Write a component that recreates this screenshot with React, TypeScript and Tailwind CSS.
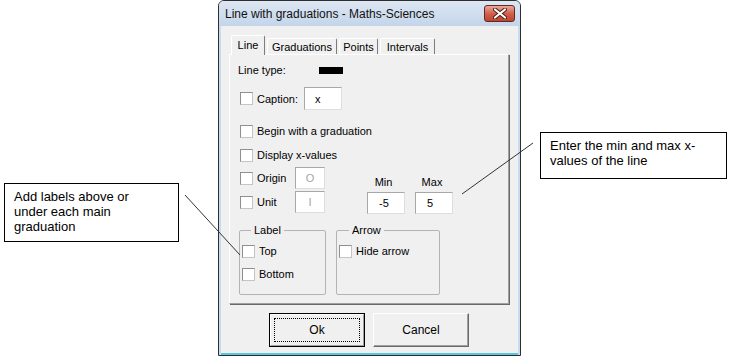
import React from 'react';

function Check() {
  return <span className="w-[13px] h-[13px] shrink-0 bg-white border border-[#8f8f8f] border-r-[#c4c4c4] border-b-[#c4c4c4]" />;
}

function TextBox({ w, value, grey, center }: { w: string; value: string; grey?: boolean; center?: boolean }) {
  return (
    <div
      className={`${w} h-[22px] bg-white border border-[#a8a8a8] border-r-[#dedede] border-b-[#dedede] flex items-center ${center ? 'justify-center' : 'pl-[11px]'} ${grey ? 'text-[#a6a6a6]' : 'text-black'}`}
    >
      {value}
    </div>
  );
}

function CheckRow({ label, className = '' }: { label: string; className?: string }) {
  return (
    <div className={`flex items-center gap-[4px] h-[14px] ${className}`}>
      <Check />
      <span>{label}</span>
    </div>
  );
}

export default function App() {
  const tabs = [
    { name: 'Line', w: 'w-[34px]' },
    { name: 'Graduations', w: 'w-[70px]' },
    { name: 'Points', w: 'w-[39px]' },
    { name: 'Intervals', w: 'w-[55px]' },
  ];

  return (
    <div className="relative w-[729px] h-[359px] bg-white flex font-['Liberation_Sans',Arial,sans-serif] text-black overflow-hidden">
      {/* left callout */}
      <div className="w-[218px] shrink-0 pl-[4px] pt-[183px]">
        <div className="w-[175px] h-[59px] border border-black pl-[9px] pt-[5px] text-[13px] leading-[15px]">
          Add labels above or
          <br />
          under each main
          <br />
          graduation
        </div>
      </div>

      {/* dialog window */}
      <div className="w-[303px] h-[356px] shrink-0 border border-[#2e2e2e] rounded-t-[6px] bg-[#c9dbef] flex flex-col overflow-hidden">
        <div className="h-[25px] shrink-0 bg-gradient-to-b from-[#dde7f3] to-[#c4d5ea] flex items-start justify-between">
          <span className="pl-[6px] pt-[5px] text-[12px] leading-[16px] text-[#111]">
            Line with graduations - Maths-Sciences
          </span>
          <div className="mt-[4px] mr-[5px] w-[31px] h-[17px] rounded-[3px] border border-[#5d2b24] bg-gradient-to-b from-[#e9a899] via-[#d2604d] to-[#c0442e] flex items-center justify-center">
            <svg width="14" height="11" viewBox="0 0 14 11">
              <path d="M2 1.5 L12 9.5 M12 1.5 L2 9.5" stroke="#4a1d16" strokeWidth="4" strokeLinecap="round" />
              <path d="M2 1.5 L12 9.5 M12 1.5 L2 9.5" stroke="#ffffff" strokeWidth="2.2" strokeLinecap="round" />
            </svg>
          </div>
        </div>

        <div className="flex-1 mx-[2px] bg-[#f0f0f0] border-b-2 border-b-[#59c6e6] flex flex-col text-[11px] leading-[14px]">
          {/* tab strip */}
          <div className="ml-[8px] mt-[9px] h-[19px] pl-[2px] flex items-end relative z-10">
            {tabs.map((t, i) =>
              i === 0 ? (
                <div
                  key={t.name}
                  className={`${t.w} h-[20px] -mb-[1px] bg-[#f0f0f0] border-l border-t border-white border-r border-r-[#7d7d7d] rounded-t-[2px] flex items-start justify-center pt-[2px]`}
                >
                  {t.name}
                </div>
              ) : (
                <div
                  key={t.name}
                  className={`${t.w} h-[16px] ml-[2px] border-l border-t border-white border-r border-r-[#7d7d7d] rounded-t-[2px] flex items-start justify-center pt-[1px]`}
                >
                  {t.name}
                </div>
              )
            )}
          </div>

          {/* tab panel */}
          <div className="ml-[8px] w-[280px] h-[250px] border-l border-t border-white border-r border-b border-r-[#a0a0a0] border-b-[#a0a0a0] shadow-[1px_1px_0_#696969] pl-[10px] flex flex-col">
            <div className="mt-[8px] h-[14px] flex items-center -ml-[2px]">
              <span className="w-[81px]">Line type:</span>
              <span className="w-[24px] h-[7px] bg-black" />
            </div>

            <div className="mt-[10px] h-[23px] flex items-center">
              <Check />
              <span className="ml-[4px] w-[47px]">Caption:</span>
              <div className="w-[38px] h-[23px] bg-white border border-[#a8a8a8] border-r-[#dedede] border-b-[#dedede] flex items-center pl-[10px]">
                x
              </div>
            </div>

            <CheckRow label="Begin with a graduation" className="mt-[14px]" />
            <CheckRow label="Display x-values" className="mt-[10px]" />

            <div className="mt-[5px] flex items-start">
              <div className="flex flex-col gap-[2px] w-[85px]">
                <div className="h-[22px] flex items-center">
                  <Check />
                  <span className="ml-[4px] w-[38px]">Origin</span>
                  <TextBox w="w-[30px]" value="O" grey center />
                </div>
                <div className="h-[22px] flex items-center">
                  <Check />
                  <span className="ml-[4px] w-[38px]">Unit</span>
                  <TextBox w="w-[30px]" value="I" grey center />
                </div>
              </div>
              <div className="ml-[42px] mt-[8px] flex gap-[10px]">
                <div className="flex flex-col items-center w-[38px]">
                  <span className="h-[14px] -ml-[5px]">Min</span>
                  <div className="mt-[3px]">
                    <TextBox w="w-[38px]" value="-5" />
                  </div>
                </div>
                <div className="flex flex-col items-center w-[38px]">
                  <span className="h-[14px] -ml-[4px]">Max</span>
                  <div className="mt-[3px]">
                    <TextBox w="w-[38px]" value="5" />
                  </div>
                </div>
              </div>
            </div>

            <div className="mt-[9px] -ml-[1px] flex gap-[10px]">
              <fieldset className="w-[87px] h-[72px] border border-[#b4b4b4] rounded-[2px] pl-[2px]">
                <legend className="ml-[9px] px-[3px] leading-[14px]">Label</legend>
                <CheckRow label="Top" className="mt-[7px]" />
                <CheckRow label="Bottom" className="mt-[9px]" />
              </fieldset>
              <fieldset className="w-[104px] h-[72px] border border-[#b4b4b4] rounded-[2px] pl-[2px]">
                <legend className="ml-[10px] px-[3px] leading-[14px]">Arrow</legend>
                <CheckRow label="Hide arrow" className="mt-[7px]" />
              </fieldset>
            </div>
          </div>

          {/* buttons */}
          <div className="mt-[9px] ml-[48px] flex gap-[8px]">
            <div className="w-[96px] h-[34px] border border-black bg-[#f0f0f0]">
              <div className="h-full border border-t-white border-l-white border-r-[#a0a0a0] border-b-[#a0a0a0] p-[3px]">
                <div className="h-full border border-dotted border-black flex items-center justify-center text-[12px]">
                  Ok
                </div>
              </div>
            </div>
            <div className="w-[96px] h-[34px] border border-t-white border-l-white border-r-[#696969] border-b-[#696969] shadow-[inset_-1px_-1px_0_#a0a0a0] bg-[#f0f0f0] flex items-center justify-center text-[12px]">
              Cancel
            </div>
          </div>
        </div>
      </div>

      {/* right callout */}
      <div className="pl-[19px] pt-[132px]">
        <div className="w-[187px] h-[47px] border border-black pl-[9px] pt-[5px] text-[13px] leading-[15px]">
          Enter the min and max x-
          <br />
          values of the line
        </div>
      </div>

      {/* leader lines */}
      <svg className="absolute inset-0 pointer-events-none" width="729" height="359">
        <line x1="185" y1="195" x2="240" y2="255" stroke="#333" strokeWidth="1" />
        <line x1="533" y1="143" x2="462" y2="194" stroke="#333" strokeWidth="1" />
      </svg>
    </div>
  );
}
